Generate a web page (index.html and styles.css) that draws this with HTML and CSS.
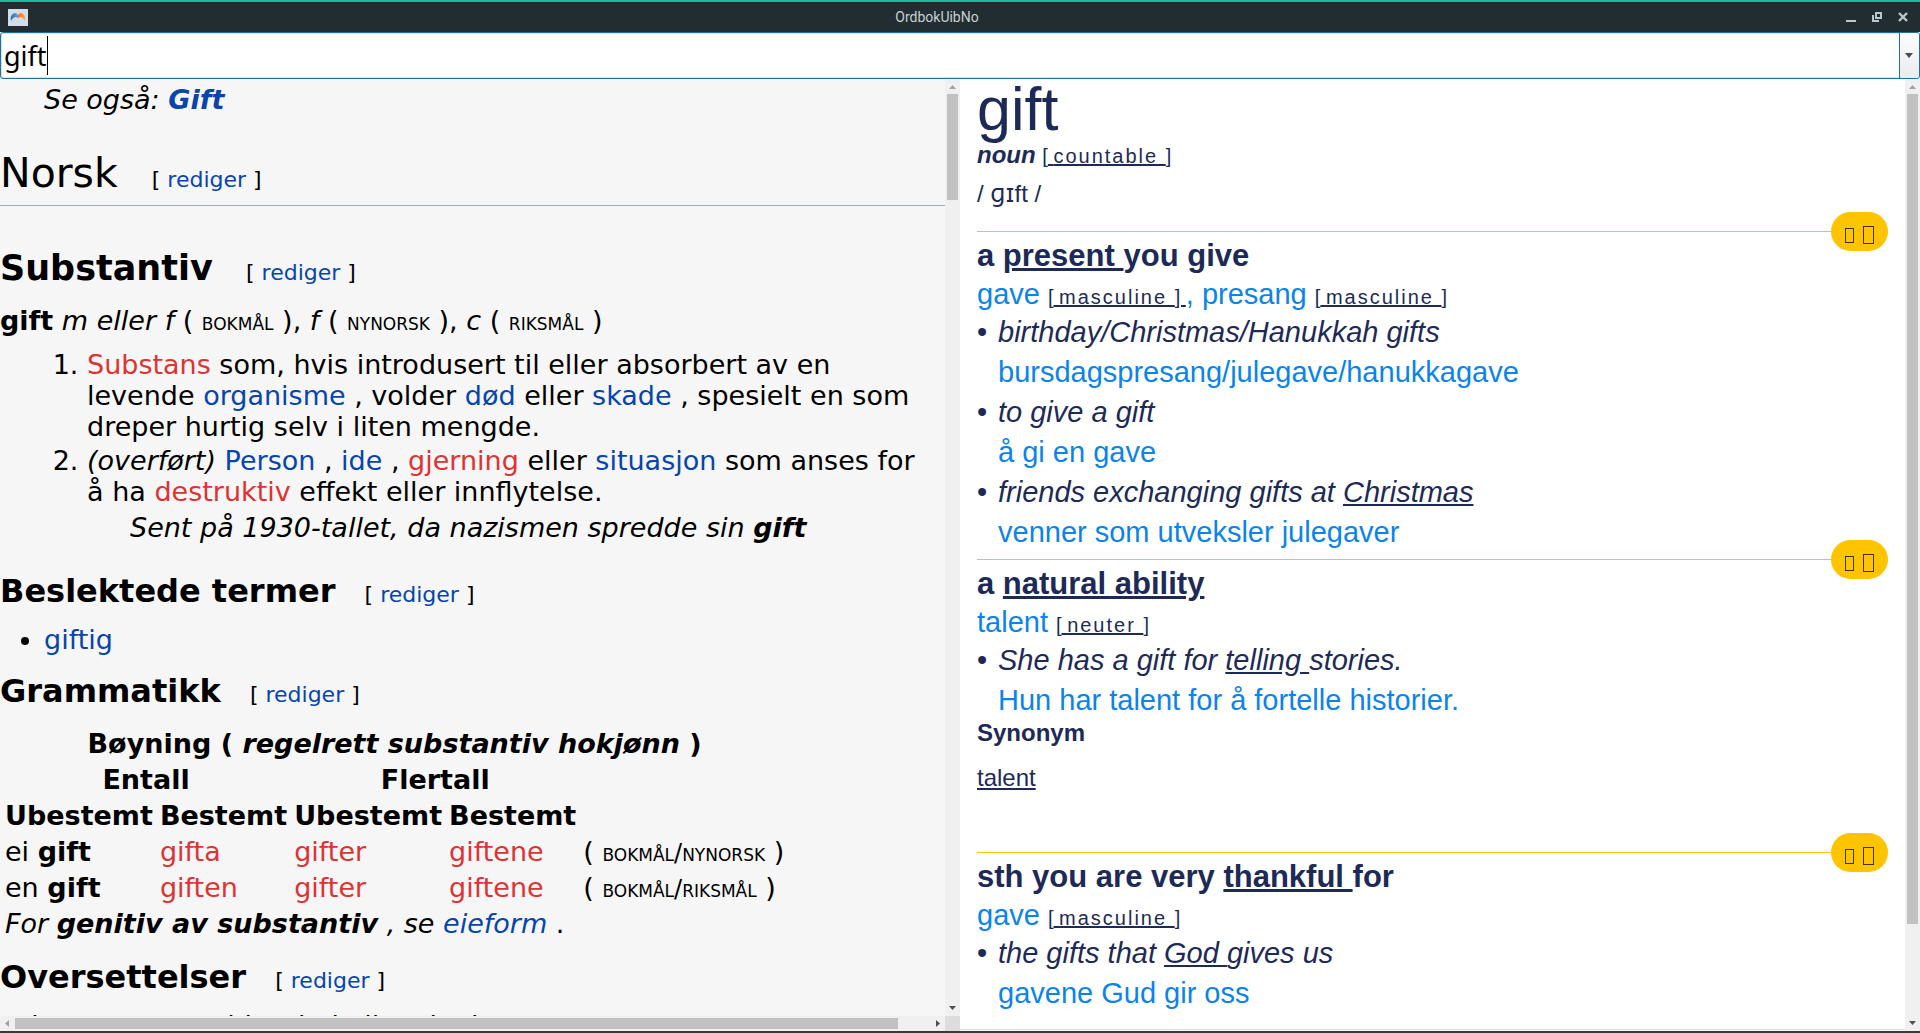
FILE: index.html
```html
<!DOCTYPE html>
<html lang="nb">
<head>
<meta charset="utf-8">
<title>OrdbokUibNo</title>
<link rel="stylesheet" href="styles.css">
</head>
<body class="window">
<header class="titlebar">
  <svg class="app-icon" width="20" height="17" viewBox="0 0 20 17" aria-hidden="true">
    <defs>
      <linearGradient id="b" x2="1"><stop stop-color="#1f6fb5"/><stop offset="1" stop-color="#6fa0cf"/></linearGradient>
      <linearGradient id="o" x2="1"><stop stop-color="#ff6a1a"/><stop offset="1" stop-color="#ffa45e"/></linearGradient>
    </defs>
    <rect width="20" height="17" fill="#d3dde9"/>
    <path d="M3 12C2 7 4 4 8 4L10 6V9L8 8Q5 8 3 12Z" fill="url(#b)"/>
    <path d="M17 12C18 7 16 4 12 4L10 6V9L12 8Q15 8 17 12Z" fill="url(#o)"/>
  </svg>
  <h1 class="window-title">OrdbokUibNo</h1>
  <div class="window-buttons">
    <button class="window-button" aria-label="Minimer"><svg width="10" height="10" viewBox="0 0 10 10"><path d="M0 8h10v2H0z" fill="#b9c8ce"/></svg></button>
    <button class="window-button" aria-label="Gjenopprett"><svg width="10" height="10" viewBox="0 0 10 10"><path d="M4 1h5v5H4zM1 3v6h6" fill="none" stroke="#b9c8ce" stroke-width="2"/></svg></button>
    <button class="window-button" aria-label="Lukk"><svg width="10" height="10" viewBox="0 0 10 10"><path d="M1 1l8 8M9 1l-8 8" stroke="#b9c8ce" stroke-width="2.4"/></svg></button>
  </div>
</header>

<form class="search">
  <label class="search-field"><input class="search-input" type="text" aria-label="Oppslagsord" value="gift"><span class="caret"></span></label>
  <button class="search-drop" type="button" aria-label="Vis forslag"><svg width="8" height="5" viewBox="0 0 8 5"><path d="M0 0h8L4 5z" fill="#4b4b4b"/></svg></button>
</form>

<main class="panes">
  <section class="pane wiki">
    <div class="view">
      <article class="wiki-text">
        <p class="see-also"><i>Se også: <b><a href="#">Gift</a></b></i></p>
        <h2 class="language">Norsk <span class="edit">[ <a href="#">rediger</a> ]</span></h2>
        <h3 class="word-class">Substantiv <span class="edit">[ <a href="#">rediger</a> ]</span></h3>
        <p class="headword"><b>gift</b> <i>m eller f</i> ( <span class="dialect">bokmål</span> ), <i>f</i> ( <span class="dialect">nynorsk</span> ), <i>c</i> ( <span class="dialect">riksmål</span> )</p>
        <ol class="meanings">
          <li><a class="missing" href="#">Substans</a> som, hvis introdusert til eller absorbert av en levende <a href="#">organisme</a> , volder <a href="#">død</a> eller <a href="#">skade</a> , spesielt en som dreper hurtig selv i liten mengde.</li>
          <li><i>(overført)</i> <a href="#">Person</a> , <a href="#">ide</a> , <a class="missing" href="#">gjerning</a> eller <a href="#">situasjon</a> som anses for å ha <a class="missing" href="#">destruktiv</a> effekt eller innflytelse.
            <p class="usage"><i>Sent på 1930-tallet, da nazismen spredde sin <b>gift</b></i></p></li>
        </ol>
        <h4 class="topic">Beslektede termer <span class="edit">[ <a href="#">rediger</a> ]</span></h4>
        <ul class="related"><li><a href="#">giftig</a></li></ul>
        <h4 class="topic">Grammatikk <span class="edit">[ <a href="#">rediger</a> ]</span></h4>
        <table class="inflection">
          <tr><th colspan="5">Bøyning ( <i>regelrett substantiv hokjønn</i> )</th></tr>
          <tr><th colspan="2">Entall</th><th colspan="2">Flertall</th></tr>
          <tr><th>Ubestemt</th><th>Bestemt</th><th>Ubestemt</th><th>Bestemt</th></tr>
          <tr><td>ei <b>gift</b></td><td><a class="missing" href="#">gifta</a></td><td><a class="missing" href="#">gifter</a></td><td><a class="missing" href="#">giftene</a></td><td>( <span class="dialect">bokmål/nynorsk</span> )</td></tr>
          <tr><td>en <b>gift</b></td><td><a class="missing" href="#">giften</a></td><td><a class="missing" href="#">gifter</a></td><td><a class="missing" href="#">giftene</a></td><td>( <span class="dialect">bokmål/riksmål</span> )</td></tr>
          <tr><td colspan="5"><i>For <b>genitiv av substantiv</b> , se <a href="#">eieform</a></i> .</td></tr>
        </table>
        <h4 class="topic">Oversettelser <span class="edit">[ <a href="#">rediger</a> ]</span></h4>
        <p class="translation-head">substans som volder død eller skade</p>
      </article>
      <div class="scroll scroll-v">
        <svg width="15" height="15" viewBox="0 0 15 15"><path d="M4 10h7L7.500 6z" fill="#a3a3a3"/></svg>
        <div class="track"><div class="thumb thumb-wiki"></div></div>
        <svg width="15" height="15" viewBox="0 0 15 15"><path d="M4 5h7L7.500 9z" fill="#505050"/></svg>
      </div>
    </div>
    <div class="scroll scroll-h">
      <svg width="15" height="15" viewBox="0 0 15 15"><path d="M9 4v7L5 7.500z" fill="#a3a3a3"/></svg>
      <div class="track"><div class="thumb thumb-wide"></div></div>
      <svg width="15" height="15" viewBox="0 0 15 15"><path d="M6 4v7l4-3.500z" fill="#505050"/></svg>
      <div class="corner"></div>
    </div>
  </section>

  <section class="pane">
    <div class="view">
      <article class="dictionary">
        <h2 class="entry">gift</h2>
        <p class="grammar"><b><i>noun</i></b> <span class="label">[<a href="#"> <span class="spaced">countable </span></a>]</span></p>
        <p class="ipa">/ <span class="phonetic">ɡɪ</span>ft /</p>

        <section class="sense">
          <div class="badge"><span class="tofu"></span><span class="tofu tofu-large"></span></div>
          <h3 class="gloss">a <a href="#">present </a>you give</h3>
          <p class="translation">gave <span class="label">[<a href="#"> <span class="spaced">masculine </span>] </a></span>, presang <span class="label">[<a href="#"> <span class="spaced">masculine </span></a>]</span></p>
          <ul class="examples">
            <li><i>birthday/Christmas/Hanukkah gifts</i><p class="example-no">bursdagspresang/julegave/hanukkagave</p></li>
            <li><i>to give a gift</i><p class="example-no">å gi en gave</p></li>
            <li><i>friends exchanging gifts at <a href="#">Christmas</a></i><p class="example-no">venner som utveksler julegaver</p></li>
          </ul>
        </section>

        <section class="sense">
          <div class="badge"><span class="tofu"></span><span class="tofu tofu-large"></span></div>
          <h3 class="gloss">a <a href="#">natural ability</a></h3>
          <p class="translation">talent <span class="label">[<a href="#"> <span class="spaced">neuter </span></a>]</span></p>
          <ul class="examples">
            <li><i>She has a gift for <a href="#">telling </a>stories.</i><p class="example-no">Hun har talent for å fortelle historier.</p></li>
          </ul>
          <h4 class="synonym-title">Synonym</h4>
          <p class="synonym"><a href="#">talent</a></p>
        </section>

        <section class="sense">
          <div class="badge"><span class="tofu"></span><span class="tofu tofu-large"></span></div>
          <h3 class="gloss">sth you are very <a href="#">thankful </a>for</h3>
          <p class="translation">gave <span class="label">[<a href="#"> <span class="spaced">masculine </span></a>]</span></p>
          <ul class="examples">
            <li><i>the gifts that <a href="#">God </a>gives us</i><p class="example-no">gavene Gud gir oss</p></li>
          </ul>
        </section>
        <hr class="end-rule">
      </article>
      <div class="scroll scroll-v">
        <svg width="15" height="15" viewBox="0 0 15 15"><path d="M4 10h7L7.500 6z" fill="#a3a3a3"/></svg>
        <div class="track"><div class="thumb thumb-dictionary"></div></div>
        <svg width="15" height="15" viewBox="0 0 15 15"><path d="M4 5h7L7.500 9z" fill="#505050"/></svg>
      </div>
    </div>
  </section>
</main>
</body>
</html>
```
FILE: styles.css
```css
* { box-sizing: border-box; }
h1, h2, h3, h4, p, ul, ol { margin: 0; padding: 0; }

.window {
  display: flex;
  flex-direction: column;
  height: 100vh;
  margin: 0;
  overflow: hidden;
  background: #fff;
  border-top: 2px solid #1abc9c;
  border-bottom: 2px solid #2a3f45;
}

/* Title bar */
.titlebar {
  display: flex;
  align-items: center;
  flex: none;
  height: 30px;
  padding: 0 12px 0 8px;
  background: #222d32;
}
.window-title {
  flex: 1;
  font: 400 14px/30px Roboto, sans-serif;
  text-align: center;
  color: #c5d0d4;
}
.window-buttons { display: flex; gap: 16px; }
.window-button { display: block; width: 10px; height: 10px; padding: 0; border: 0; background: none; }
.window-button svg { display: block; }

/* Search box */
.search {
  display: flex;
  flex: none;
  height: 47px;
  border: 1px solid #1f6fa3;
  border-radius: 3px;
  box-shadow: inset 0 0 0 1px #d4e4ee;
}
.search-field { display: flex; align-items: center; flex: 1; min-width: 0; padding-left: 3px; }
.search-input {
  field-sizing: content;
  padding: 0;
  border: 0;
  outline: 0;
  background: none;
  font: 27px/40px "Noto Sans", sans-serif;
  color: #000;
}
.caret { width: 1px; height: 39px; background: #000; }
.search-drop {
  width: 20px;
  padding: 0 2px 4px 0;
  border: 0;
  border-left: 1px solid #1f6fa3;
  border-radius: 0 3px 3px 0;
  background: linear-gradient(#fdfdfd, #ebebeb);
}

/* Panes */
.panes { display: grid; grid-template-columns: 1fr 1fr; flex: 1; min-height: 0; }
.pane { display: flex; flex-direction: column; min-width: 0; min-height: 0; }
.view { display: flex; flex: 1; min-height: 0; }

.scroll { display: flex; flex: none; background: #f0f0f0; }
.scroll svg { display: block; flex: none; }
.scroll-v { flex-direction: column; width: 15px; }
.scroll-h { height: 15px; }
.track { flex: 1; min-height: 0; padding: 0 2px; }
.scroll-h .track { padding: 2px 0; }
.thumb { background: #c1c1c1; }
.thumb-wiki { height: 106px; }
.thumb-wide { width: 883px; max-width: 100%; height: 11px; }
.thumb-dictionary { height: 90%; }
.corner { width: 15px; background: #dcdcdc; }

/* Wiktionary article */
.wiki { background: #f6f6f6; }
.wiki-text {
  flex: 1;
  min-width: 0;
  overflow: hidden;
  padding-top: 5px;
  font: 27px/31px "DejaVu Sans", sans-serif;
  color: #000;
}
.wiki-text a { color: #0645ad; text-decoration: none; }
.wiki-text a.missing { color: #dd3333; }
.see-also { padding-left: 44px; }
.edit { margin-left: 21px; font-size: 22px; font-weight: 400; line-height: 1; }
.language {
  margin: 34px 0 42px;
  padding-bottom: 8px;
  border-bottom: 1px solid #a2a9b1;
  font-size: 41px;
  font-weight: 400;
  line-height: 48px;
}
.word-class { margin-bottom: 16px; font-size: 35px; line-height: 41px; }
.dialect { font-size: 24px; font-variant: small-caps; line-height: 1; }
.meanings { margin: 13px 0 30px; padding: 0 16px 0 87px; }
.meanings li + li { margin-top: 3px; }
.usage { margin-top: 5px; padding-left: 43px; }
.topic { margin-bottom: 14px; font-size: 32px; line-height: 37px; }
.topic .edit { margin-left: 18px; }
.related { margin-bottom: 18px; padding-left: 44px; }
.inflection { border-spacing: 3px; margin-bottom: 16px; }
.inflection th, .inflection td { padding: 1px 2px; }

/* Bilingual dictionary article */
.dictionary {
  flex: 1;
  min-width: 0;
  overflow: hidden;
  padding: 0 17px;
  font: 29px/40px "Liberation Sans", Arial, sans-serif;
  color: #1d2a57;
}
.dictionary a { color: inherit; white-space: pre-wrap; }
.entry { font-size: 61px; font-weight: 400; line-height: 60px; }
.grammar { font-size: 24px; line-height: 32px; }
.ipa { margin-bottom: 14px; font-size: 24px; line-height: 46px; }
.phonetic { font-family: "DejaVu Sans", sans-serif; line-height: 1; }
.label { font-size: 20px; line-height: 1; color: #1d2a57; }
.spaced { letter-spacing: 2px; }
.sense { position: relative; margin-bottom: 7px; padding-top: 3px; border-top: 1px solid #ffc400; }
.badge {
  position: absolute;
  top: -20px;
  right: 0;
  display: flex;
  align-items: center;
  justify-content: center;
  gap: 9px;
  width: 57px;
  height: 39px;
  padding-top: 7px;
  border-radius: 20px;
  background: #ffc400;
}
.tofu { width: 9px; height: 15px; border: 1px solid #3d3212; }
.tofu-large { width: 11px; height: 18px; }
.gloss { font-size: 31px; line-height: 42px; }
.translation { line-height: 35px; color: #0a84ea; }
.examples { list-style: none; }
.examples li { padding-left: 21px; }
.examples li::before { content: "•"; float: left; margin-left: -21px; }
.example-no { color: #0a84ea; }
.synonym-title { font-size: 24px; line-height: 26px; }
.synonym { margin: 9px 0 51px; font-size: 24px; line-height: 46px; }
.end-rule { margin: 16px -17px 0; border: 0; border-top: 1px solid #d8dcd8; }
```
